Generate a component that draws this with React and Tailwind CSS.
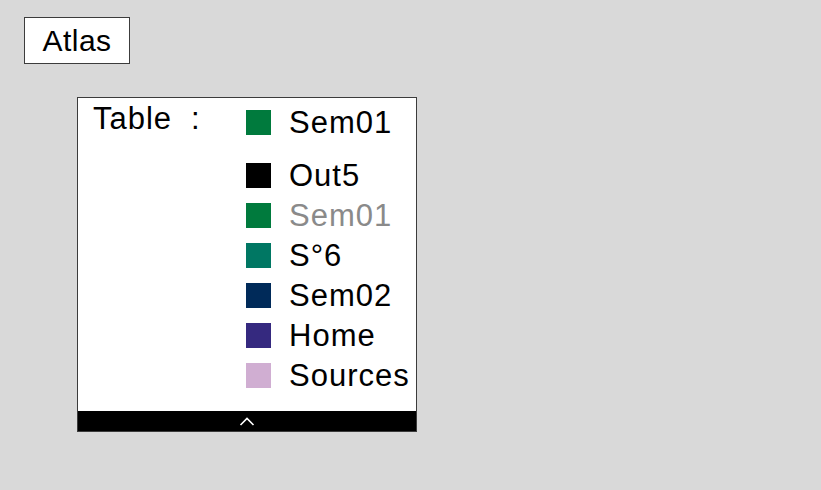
import React from "react";

const items = [
  { name: "Out5", color: "bg-[#000000]" },
  { name: "Sem01", color: "bg-[#007a3d]", muted: true },
  { name: "S°6", color: "bg-[#007763]" },
  { name: "Sem02", color: "bg-[#002a59]" },
  { name: "Home", color: "bg-[#35297f]" },
  { name: "Sources", color: "bg-[#d0aed2]" },
];

function Row({ name, color, muted }) {
  return (
    <div className="h-[40px] flex items-center">
      <span className={`w-[25px] h-[25px] ${color} shrink-0`} />
      <span className={`ml-[18px] leading-none tracking-[1px] ${muted ? "text-[#8a8a8a]" : "text-black"}`}>{name}</span>
    </div>
  );
}

export default function App() {
  return (
    <div className="min-h-screen bg-[#d9d9d9] flex flex-col items-start text-[31px] text-black [font-family:'Liberation_Sans',Arial,sans-serif]">
      {/* bouton Atlas */}
      <div className="ml-[24px] mt-[17px] w-[106px] h-[47px] bg-white border border-[#3c3c3c] flex items-center justify-center leading-none text-[30px] tracking-[0.5px]">
        Atlas
      </div>

      {/* panneau de légende */}
      <div className="ml-[77px] mt-[33px] w-[340px] h-[335px] bg-white border border-[#3c3c3c] flex flex-col">
        <div className="flex-1 flex pt-[4px]">
          <div className="w-[168px] pl-[15px] h-[33px] flex items-center leading-none tracking-[1px]">
            <span>Table</span>
            <span className="ml-[19px]">:</span>
          </div>
          <div className="flex flex-col">
            <div className="h-[40px] flex items-center">
              <span className="w-[25px] h-[25px] bg-[#007a3d] shrink-0" />
              <span className="ml-[18px] leading-none tracking-[1px]">Sem01</span>
            </div>
            <div className="mt-[13px]">
              {items.map((it) => (
                <Row key={it.name + it.color} {...it} />
              ))}
            </div>
          </div>
        </div>
        <div className="h-[20px] bg-black flex items-center justify-center">
          <svg width="16" height="9" viewBox="0 0 16 9" fill="none">
            <path d="M1.5 8 L8 1.5 L14.5 8" stroke="white" strokeWidth="1.6" />
          </svg>
        </div>
      </div>
    </div>
  );
}
